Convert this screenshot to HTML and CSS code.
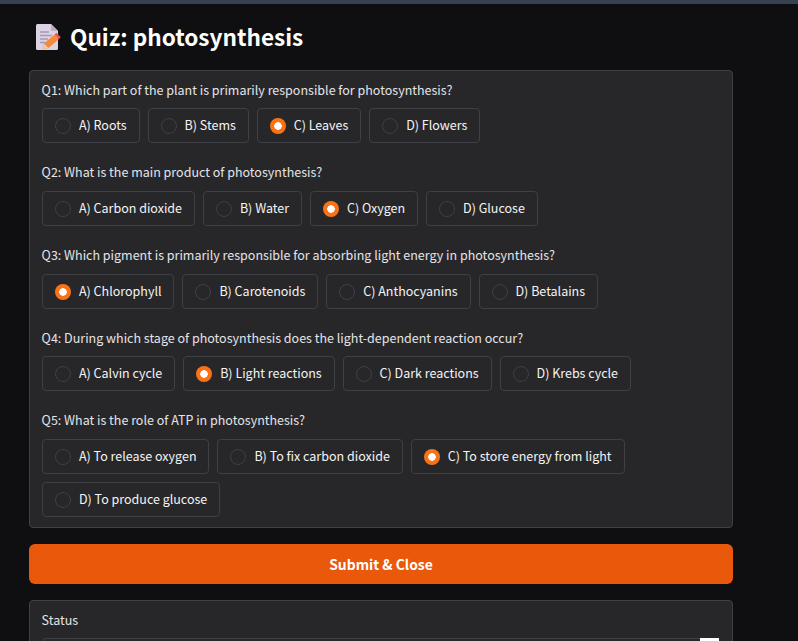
FILE: index.html
```html
<!DOCTYPE html>
<html lang="en">
<head>
<meta charset="utf-8">
<title>Quiz: photosynthesis</title>
<link rel="stylesheet" href="styles.css">
</head>
<body>
<div class="topbar"></div>
<main class="page">
  <h1 class="title">
    <svg class="memo" viewBox="0 0 26 28" width="26" height="28" aria-hidden="true">
      <path d="M1 2.500Q1 1 2.500 1H16L23 8V25.500Q23 27 21.500 27H2.500Q1 27 1 25.500Z" fill="#dcd2e4"/>
      <path d="M16 1L23 8H17.500Q16 8 16 6.500Z" fill="#b8aec4"/>
      <path d="M5 9H14M5 12.500H17M5 16H13M5 19.500H10" stroke="#a59bb0" stroke-width="1.300" fill="none"/>
      <path d="M8 26L9 20.500L19.500 11.500L24 16L13.500 25Z" fill="#f58a3c"/>
      <path d="M19.500 11.500L21.500 9.700L25.800 14.300L24 16Z" fill="#ef5350"/>
      <path d="M8 26L9 20.500L13.500 25Z" fill="#f7c9a0"/>
    </svg>
    <span>Quiz: photosynthesis</span>
  </h1>

  <section class="panel quiz">
    <fieldset class="question">
      <div class="q-label">Q1: Which part of the plant is primarily responsible for photosynthesis?</div>
      <div class="options">
        <label class="option"><span class="radio"></span>A) Roots</label>
        <label class="option"><span class="radio"></span>B) Stems</label>
        <label class="option"><span class="radio checked"></span>C) Leaves</label>
        <label class="option"><span class="radio"></span>D) Flowers</label>
      </div>
    </fieldset>
    <fieldset class="question">
      <div class="q-label">Q2: What is the main product of photosynthesis?</div>
      <div class="options">
        <label class="option"><span class="radio"></span>A) Carbon dioxide</label>
        <label class="option"><span class="radio"></span>B) Water</label>
        <label class="option"><span class="radio checked"></span>C) Oxygen</label>
        <label class="option"><span class="radio"></span>D) Glucose</label>
      </div>
    </fieldset>
    <fieldset class="question">
      <div class="q-label">Q3: Which pigment is primarily responsible for absorbing light energy in photosynthesis?</div>
      <div class="options">
        <label class="option"><span class="radio checked"></span>A) Chlorophyll</label>
        <label class="option"><span class="radio"></span>B) Carotenoids</label>
        <label class="option"><span class="radio"></span>C) Anthocyanins</label>
        <label class="option"><span class="radio"></span>D) Betalains</label>
      </div>
    </fieldset>
    <fieldset class="question">
      <div class="q-label">Q4: During which stage of photosynthesis does the light-dependent reaction occur?</div>
      <div class="options">
        <label class="option"><span class="radio"></span>A) Calvin cycle</label>
        <label class="option"><span class="radio checked"></span>B) Light reactions</label>
        <label class="option"><span class="radio"></span>C) Dark reactions</label>
        <label class="option"><span class="radio"></span>D) Krebs cycle</label>
      </div>
    </fieldset>
    <fieldset class="question">
      <div class="q-label">Q5: What is the role of ATP in photosynthesis?</div>
      <div class="options">
        <label class="option"><span class="radio"></span>A) To release oxygen</label>
        <label class="option"><span class="radio"></span>B) To fix carbon dioxide</label>
        <label class="option"><span class="radio checked"></span>C) To store energy from light</label>
        <label class="option"><span class="radio"></span>D) To produce glucose</label>
      </div>
    </fieldset>
  </section>

  <button class="submit" type="button">Submit &amp; Close</button>

  <section class="panel status">
    <div class="status-label">Status</div>
    <div class="status-box"><span class="status-chip"></span></div>
  </section>
</main>
</body>
</html>
```

FILE: styles.css
```css
* { box-sizing: border-box; }
html, body {
  margin: 0;
  height: 641px;
  overflow: hidden;
  background: #0f0f11;
}
body {
  font-family: "Noto Sans CJK JP", "Noto Sans", sans-serif;
  color: #f4f4f5;
}
.topbar { height: 4px; background: #374151; }
.page {
  width: 704px;
  height: 637px;
  overflow: hidden;
  margin-left: 29px;
  display: flex;
  flex-direction: column;
}
.title {
  display: flex;
  flex: none;
  align-items: center;
  gap: 9px;
  height: 66px;
  margin: 0;
  padding-left: 6px;
  font-size: 22.600px;
  line-height: 32px;
  font-weight: 600;
  color: #fff;
}
.panel {
  flex: none;
  background: #27272a;
  border: 1px solid #3f3f46;
  border-radius: 4px;
  padding: 0 12px;
}
.quiz {
  display: flex;
  flex-direction: column;
  gap: 20.480px;
  padding-top: 10px;
  padding-bottom: 10.080px;
}
.question {
  margin: 0;
  padding: 0;
  border: 0;
  min-width: 0;
}
.q-label {
  padding-top: 0.700px;
  margin: 0 0 10.500px -0.400px;
  font-size: 12.500px;
  line-height: 16px;
  color: #e4e4e7;
}
.options {
  display: flex;
  flex-wrap: wrap;
  gap: 8px;
}
.option {
  display: flex;
  align-items: center;
  height: 35px;
  padding: 0 11.950px 1px;
  gap: 8px;
  border: 1px solid #3f3f46;
  border-radius: 4px;
  background: #27272a;
  font-size: 12.500px;
  line-height: 18px;
  color: #f4f4f5;
}
.radio {
  width: 16px;
  height: 16px;
  margin-top: 2px;
  border-radius: 50%;
  border: 1px solid #3f3f46;
  background: #27272a;
}
.radio.checked {
  border: 0;
  background: radial-gradient(circle, #fff 0 3.500px, #f97316 4px);
}
.submit {
  flex: none;
  height: 40px;
  margin-top: 16px;
  padding-bottom: 1px;
  border: 0;
  border-radius: 6px;
  background: #ea580c;
  color: #fff;
  font-family: inherit;
  font-size: 13.900px;
  line-height: 20px;
  font-weight: 600;
}
.status {
  margin-top: 16px;
  height: 80px;
  padding-top: 10px;
}
.status-label {
  margin-left: -0.400px;
  font-size: 12.500px;
  line-height: 18px;
  color: #e4e4e7;
}
.status-box {
  position: relative;
  height: 40px;
  margin-top: 9px;
  border: 1px solid #3f3f46;
  border-radius: 4px;
}
.status-chip {
  position: absolute;
  top: -1px;
  right: 0;
  width: 19px;
  height: 4px;
  background: #fff;
}
```
